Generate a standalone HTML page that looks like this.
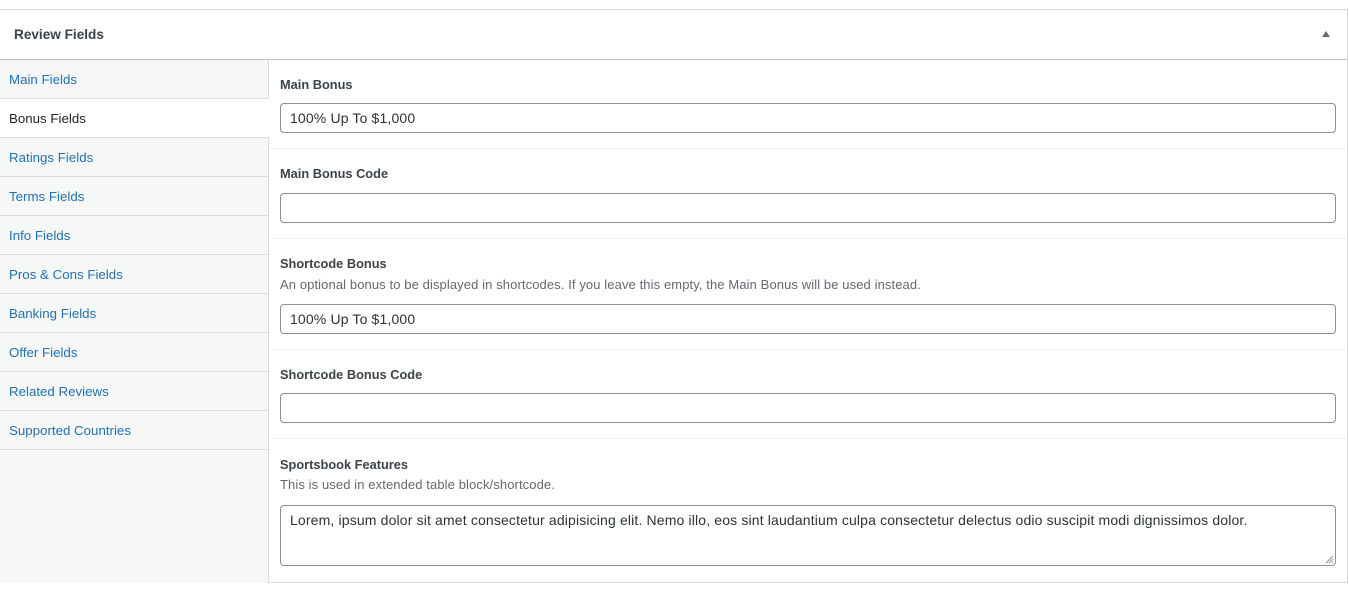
<!DOCTYPE html>
<html><head><style>
*{box-sizing:border-box;margin:0;padding:0}
body{width:1349px;height:589px;background:#fff;font-family:"Liberation Sans",sans-serif;position:relative;overflow:hidden}
.box{position:absolute;left:-1px;top:9px;width:1349px;height:574px;border:1px solid #dcdcde;background:#fff}
.hd{position:absolute;left:0;top:0;width:100%;height:50px;border-bottom:1px solid #c3c4c7}
.hd h2{position:absolute;left:14px;top:17px;font-size:13.6px;font-weight:bold;color:#3c434a}
.arrow{position:absolute;right:17px;top:21px;width:0;height:0;border-left:4px solid transparent;border-right:4px solid transparent;border-bottom:6px solid #646970}
.side{position:absolute;left:0;top:50px;width:269px;height:523px;background:#f6f7f7;border-right:1px solid #dcdcde}
.side div{height:39px;border-bottom:1px solid #dcdcde;font-size:13.3px;color:#2271b1;padding:12px 0 0 9px}
.side div.act{background:#fff;color:#1d2327;margin-right:-1px}
.lbl{position:absolute;left:280px;font-size:12.8px;font-weight:bold;color:#3c434a}
.desc{position:absolute;left:280px;font-size:13px;letter-spacing:0.1px;color:#646970}
.in{position:absolute;left:280px;width:1056px;height:30px;border:1px solid #8c8f94;border-radius:4px;font-size:14px;letter-spacing:0.15px;color:#2c3338;padding:6px 9px}
.sep{position:absolute;left:269px;width:1079px;height:1px;background:#f0f0f1}
</style></head><body>
<div class="box">
<div class="hd"><h2>Review Fields</h2><div class="arrow"></div></div>
<div class="side">
<div>Main Fields</div><div class="act">Bonus Fields</div><div>Ratings Fields</div><div>Terms Fields</div><div>Info Fields</div><div>Pros &amp; Cons Fields</div><div>Banking Fields</div><div>Offer Fields</div><div>Related Reviews</div><div>Supported Countries</div>
</div>
</div>
<div class="lbl" style="top:77px">Main Bonus</div>
<div class="in" style="top:103px">100% Up To $1,000</div>
<div class="sep" style="top:148px"></div>
<div class="lbl" style="top:166px">Main Bonus Code</div>
<div class="in" style="top:193px"></div>
<div class="sep" style="top:238px"></div>
<div class="lbl" style="top:256px">Shortcode Bonus</div>
<div class="desc" style="top:277px">An optional bonus to be displayed in shortcodes. If you leave this empty, the Main Bonus will be used instead.</div>
<div class="in" style="top:304px">100% Up To $1,000</div>
<div class="sep" style="top:349px"></div>
<div class="lbl" style="top:367px">Shortcode Bonus Code</div>
<div class="in" style="top:393px"></div>
<div class="sep" style="top:438px"></div>
<div class="lbl" style="top:457px">Sportsbook Features</div>
<div class="desc" style="top:477px">This is used in extended table block/shortcode.</div>
<div class="in" style="top:505px;height:61px">Lorem, ipsum dolor sit amet consectetur adipisicing elit. Nemo illo, eos sint laudantium culpa consectetur delectus odio suscipit modi dignissimos dolor.
<svg style="position:absolute;right:1px;bottom:1px" width="9" height="9"><path d="M8 1L1 8M8 4L4 8M8 7L7 8" stroke="#8c8f94" stroke-width="1"/></svg></div>
</body></html>
